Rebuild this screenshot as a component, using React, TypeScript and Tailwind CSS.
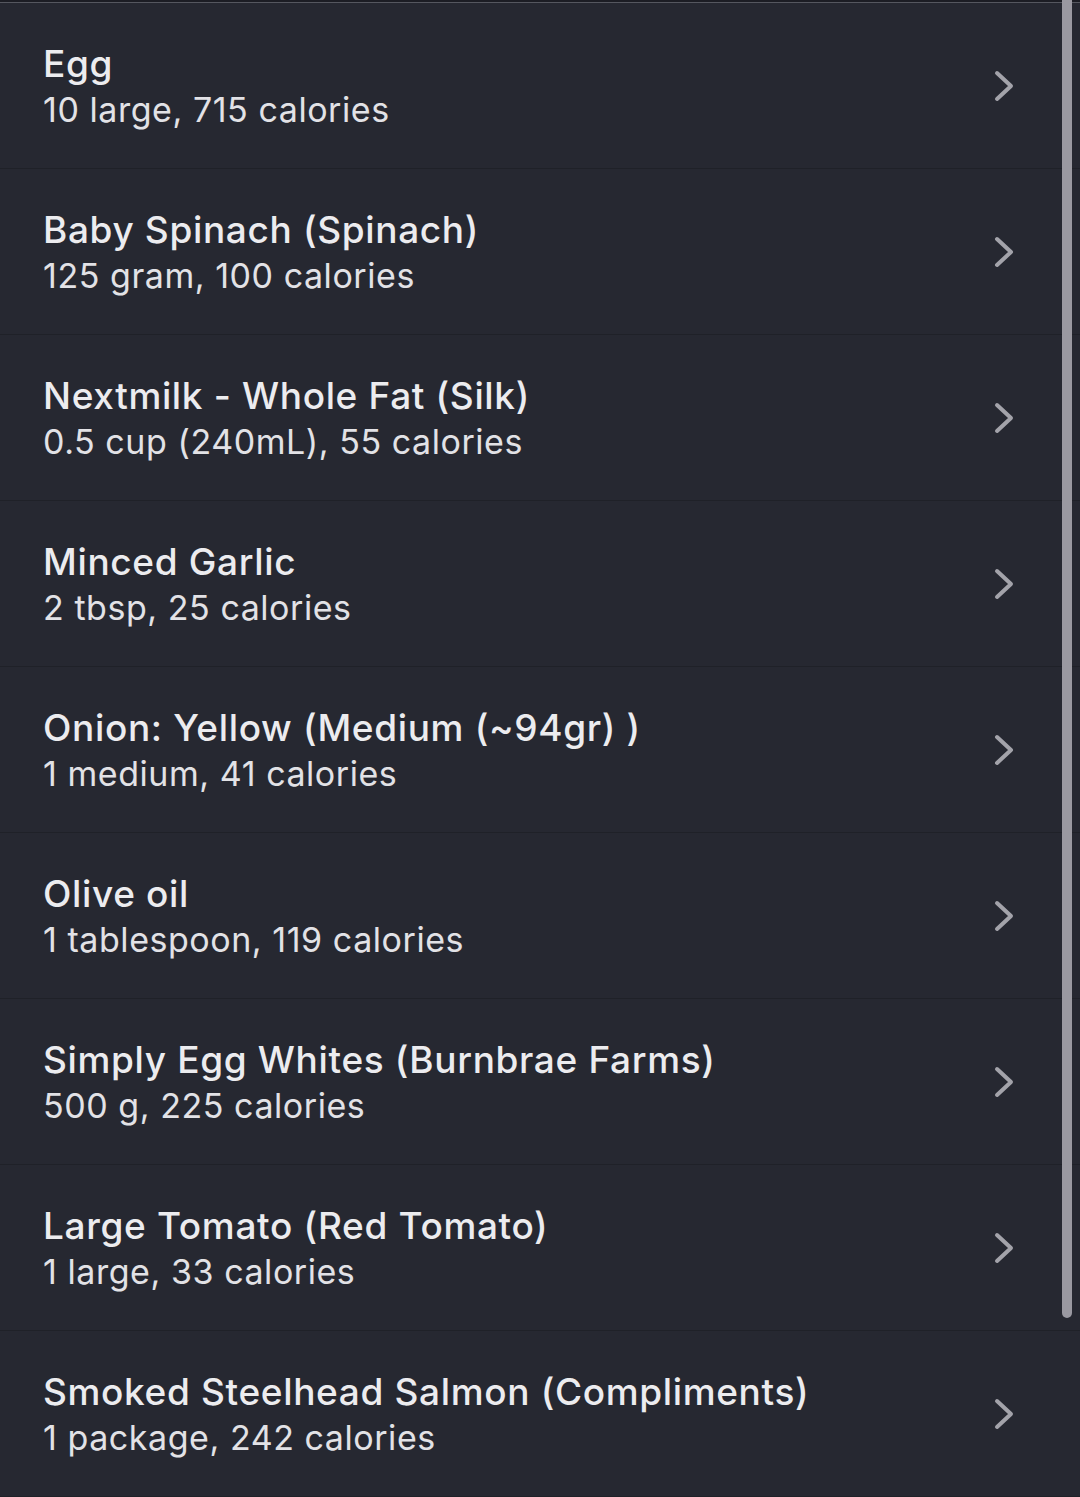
import React from "react";

const items = [
  ["Egg", "10 large, 715 calories"],
  ["Baby Spinach (Spinach)", "125 gram, 100 calories"],
  ["Nextmilk - Whole Fat (Silk)", "0.5 cup (240mL), 55 calories"],
  ["Minced Garlic", "2 tbsp, 25 calories"],
  ["Onion: Yellow (Medium (~94gr) )", "1 medium, 41 calories"],
  ["Olive oil", "1 tablespoon, 119 calories"],
  ["Simply Egg Whites (Burnbrae Farms)", "500 g, 225 calories"],
  ["Large Tomato (Red Tomato)", "1 large, 33 calories"],
  ["Smoked Steelhead Salmon (Compliments)", "1 package, 242 calories"],
];

function Chevron() {
  return (
    <svg width="24" height="34" viewBox="0 0 24 34" fill="none">
      <polyline
        points="5,4 19,17 5,30"
        stroke="#a3a3aa"
        strokeWidth="4"
        strokeLinecap="round"
        strokeLinejoin="round"
      />
    </svg>
  );
}

export default function App() {
  return (
    <div
      className="relative w-[1080px] h-[1497px] overflow-hidden bg-[#262831]"
      style={{ fontFamily: "Inter, 'Noto Sans', sans-serif" }}
    >
      <div className="h-[3px] border-b border-[#55575f] bg-[#1c1d24]" />
      {items.map(([t, s], i) => (
        <div
          key={i}
          className="flex h-[166px] items-center justify-between border-b border-[#1f2128] pl-[43px] pr-[64px]"
        >
          <div className="flex flex-col pt-[2px]">
            <div className="text-[37px] leading-[45px] font-medium text-[#ececef] tracking-[0.65px]">
              {t}
            </div>
            <div className="mt-[1px] text-[34px] leading-[45px] text-[#e2e2e6] tracking-[0.55px]">
              {s}
            </div>
          </div>
          <Chevron />
        </div>
      ))}
      <div className="absolute right-[8px] top-0 h-[1318px] w-[10px] rounded-b-full bg-[#9a99a1]" />
    </div>
  );
}
